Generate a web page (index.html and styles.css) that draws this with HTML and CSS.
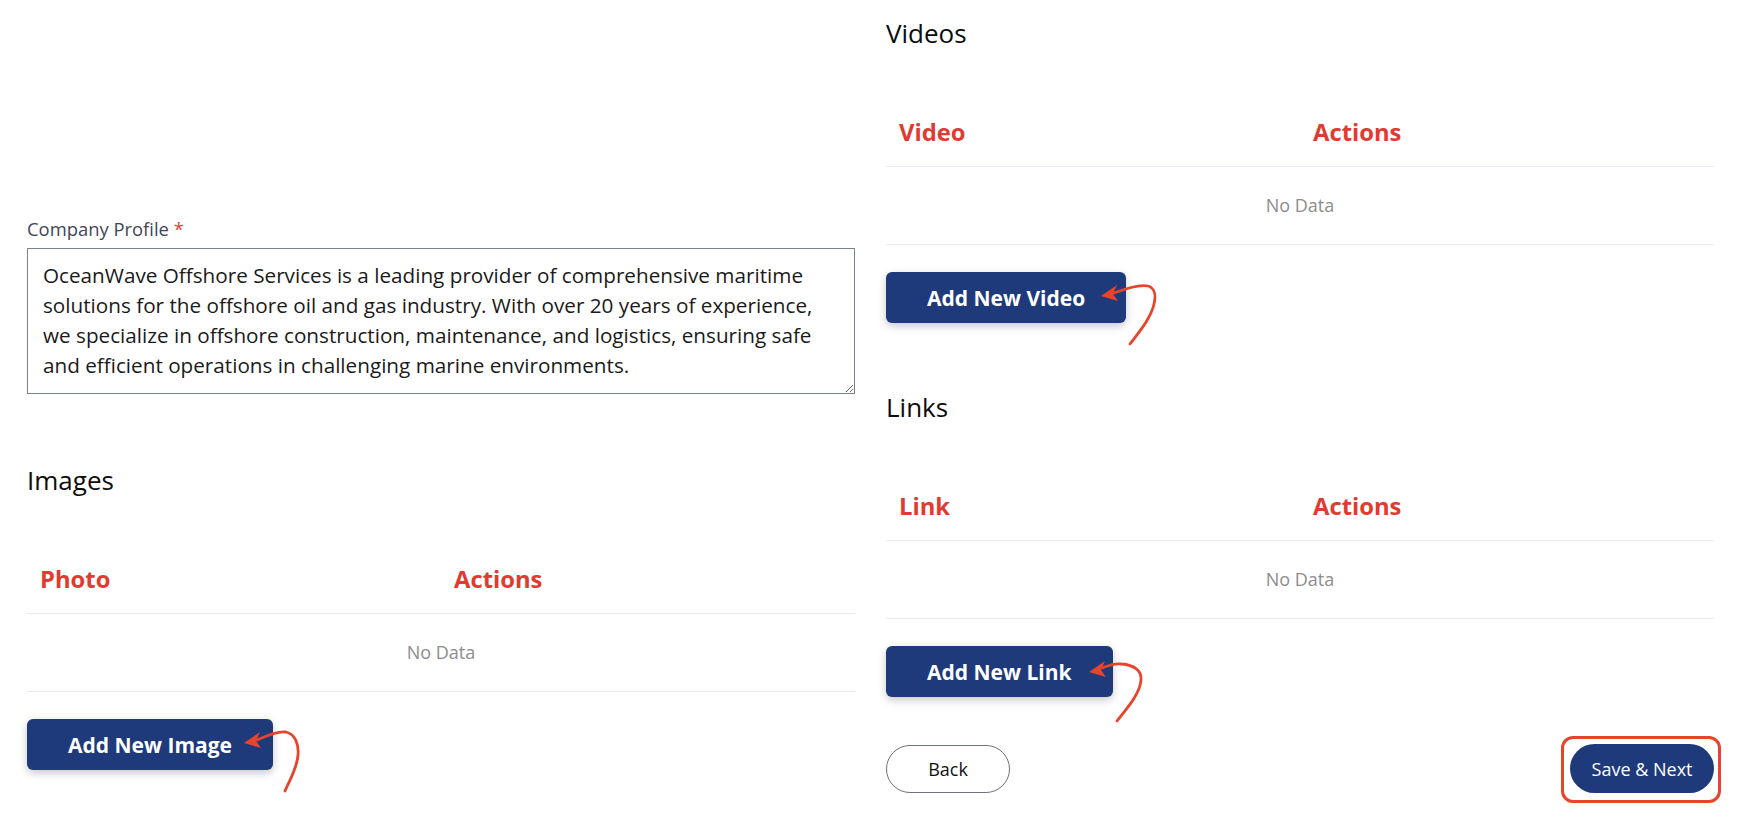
FILE: index.html
```html
<!DOCTYPE html>
<html lang="en">

<head>
    <meta charset="UTF-8">
    <meta name="viewport" content="width=device-width, initial-scale=1.0">
    <title>Company Media</title>
    <link rel="stylesheet" href="styles.css">
</head>

<body>
    <div class="page">
        <!-- left column: profile text + images -->
        <div class="col col-left">
            <label class="field-label" for="profile">Company Profile <span class="req">*</span></label>
            <textarea class="profile-input" id="profile">OceanWave Offshore Services is a leading provider of comprehensive maritime solutions for the offshore oil and gas industry. With over 20 years of experience, we specialize in offshore construction, maintenance, and logistics, ensuring safe and efficient operations in challenging marine environments.</textarea>

            <h3 class="section-title section-images">Images</h3>
            <table class="media-table">
                <thead>
                    <tr>
                        <th>Photo</th>
                        <th>Actions</th>
                    </tr>
                </thead>
                <tbody>
                    <tr>
                        <td colspan="2" class="empty">No Data</td>
                    </tr>
                </tbody>
            </table>
            <div class="add-wrap">
                <button class="btn-add">Add New Image</button>
                <svg class="hint-arrow arrow-image" width="62" height="70" viewBox="0 0 62 70">
                    <path d="M15 11 C 26 6, 36 2, 44 3 C 53 5, 57 15, 56 26 C 55 40, 47 52, 43 62" />
                    <polygon points="2,14 18,3 14,12 19,19" />
                </svg>
            </div>
        </div>

        <!-- right column: videos + links -->
        <div class="col col-right">
            <h3 class="section-title section-videos">Videos</h3>
            <table class="media-table">
                <thead>
                    <tr>
                        <th>Video</th>
                        <th>Actions</th>
                    </tr>
                </thead>
                <tbody>
                    <tr>
                        <td colspan="2" class="empty">No Data</td>
                    </tr>
                </tbody>
            </table>
            <div class="add-wrap">
                <button class="btn-add">Add New Video</button>
                <svg class="hint-arrow arrow-video" width="62" height="70" viewBox="0 0 62 70">
                    <path d="M15 11 C 28 6, 40 2, 49 4 C 56 6, 57 14, 55 22 C 52 36, 40 50, 31 62" />
                    <polygon points="2,14 18,3 14,12 19,19" />
                </svg>
            </div>

            <h3 class="section-title section-links">Links</h3>
            <table class="media-table">
                <thead>
                    <tr>
                        <th>Link</th>
                        <th>Actions</th>
                    </tr>
                </thead>
                <tbody>
                    <tr>
                        <td colspan="2" class="empty">No Data</td>
                    </tr>
                </tbody>
            </table>
            <div class="add-wrap">
                <button class="btn-add">Add New Link</button>
                <svg class="hint-arrow arrow-link" width="62" height="70" viewBox="0 0 62 70">
                    <path d="M15 10 C 22 7, 28 5, 35 6 C 46 7, 55 12, 54 22 C 53 36, 40 50, 30 63" />
                    <polygon points="2,14 18,3 14,12 19,19" />
                </svg>
            </div>

            <div class="form-footer">
                <button class="btn-back">Back</button>
                <span class="next-highlight">
                    <button class="btn-next">Save &amp; Next</button>
                </span>
            </div>
        </div>
    </div>
</body>

</html>
```

FILE: styles.css
```css
* {
    box-sizing: border-box;
}

body {
    margin: 0;
    font-family: "Open Sans", "Liberation Sans", sans-serif;
    color: #111;
    background: #fff;
}

.page {
    display: flex;
    align-items: flex-start;
    gap: 31px;
    padding: 0 27px 28px;
}

.col {
    width: 828px;
    flex: none;
}

.col-left {
    padding-top: 217px;
}

.field-label {
    display: block;
    font-size: 18.4px;
    line-height: 24px;
    color: #3f4657;
}

.req {
    color: #e0413a;
}

.profile-input {
    display: block;
    width: 100%;
    height: 146px;
    margin-top: 7px;
    padding: 11px 15px 12px;
    border: 1px solid #7c8093;
    border-radius: 0;
    font-family: "Open Sans", "Liberation Sans", sans-serif;
    font-size: 20.7px;
    line-height: 30px;
    color: #1a1a1a;
}

.section-title {
    margin: 0;
    font-size: 26px;
    line-height: 36px;
    font-weight: 500;
    color: #0d0d0d;
}

.section-videos {
    margin-top: 15px;
}

.section-images {
    margin-top: 68px;
}

.section-links {
    margin-top: 66px;
}

.media-table {
    width: 100%;
    margin-top: 50px;
    border-collapse: collapse;
    table-layout: fixed;
}

.media-table th {
    width: 50%;
    padding: 16px 13px 19px;
    text-align: left;
    font-size: 23.8px;
    line-height: 30px;
    font-weight: 700;
    color: #df3b31;
    border-bottom: 1px solid #e9e9ef;
}

.media-table td {
    padding: 26px 14px;
    font-size: 18px;
    line-height: 25px;
    border-bottom: 1px solid #e9e9ef;
}

.media-table .empty {
    text-align: center;
    color: #8d8d8d;
}

.add-wrap {
    position: relative;
    display: inline-block;
    margin-top: 27px;
}

.btn-add {
    display: block;
    height: 51px;
    padding: 0 41px;
    border: none;
    border-radius: 6px;
    background: #1e3a7b;
    color: #fff;
    font-family: "Open Sans", "Liberation Sans", sans-serif;
    font-size: 21px;
    font-weight: 700;
    box-shadow: 0 3px 8px rgba(0, 0, 0, 0.22);
}

/* hand drawn hint arrows */
.hint-arrow {
    position: absolute;
    top: 10px;
    overflow: visible;
}

.hint-arrow path {
    fill: none;
    stroke: #e8432b;
    stroke-width: 2.8;
    stroke-linecap: round;
}

.hint-arrow polygon {
    fill: #e8432b;
}

.arrow-image {
    left: calc(100% - 31px);
}

.arrow-video {
    left: calc(100% - 27px);
}

.arrow-link {
    left: calc(100% - 26px);
    top: 12px;
}

.form-footer {
    display: flex;
    justify-content: space-between;
    align-items: center;
    margin-top: 47px;
}

.btn-back {
    width: 124px;
    height: 48px;
    border: 1px solid #6d7080;
    border-radius: 24px;
    background: #fff;
    color: #111;
    font-family: "Open Sans", "Liberation Sans", sans-serif;
    font-size: 18px;
}

/* red highlight box round the save button */
.next-highlight {
    display: block;
    margin: -8px -7px -10px -9px;
    padding: 5px 4px 7px 6px;
    border: 3px solid #e8432b;
    border-radius: 12px;
}

.btn-next {
    display: block;
    width: 144px;
    height: 49px;
    border: none;
    border-radius: 25px;
    background: #1e3a7b;
    color: #fff;
    font-family: "Open Sans", "Liberation Sans", sans-serif;
    font-size: 18px;
}
```
